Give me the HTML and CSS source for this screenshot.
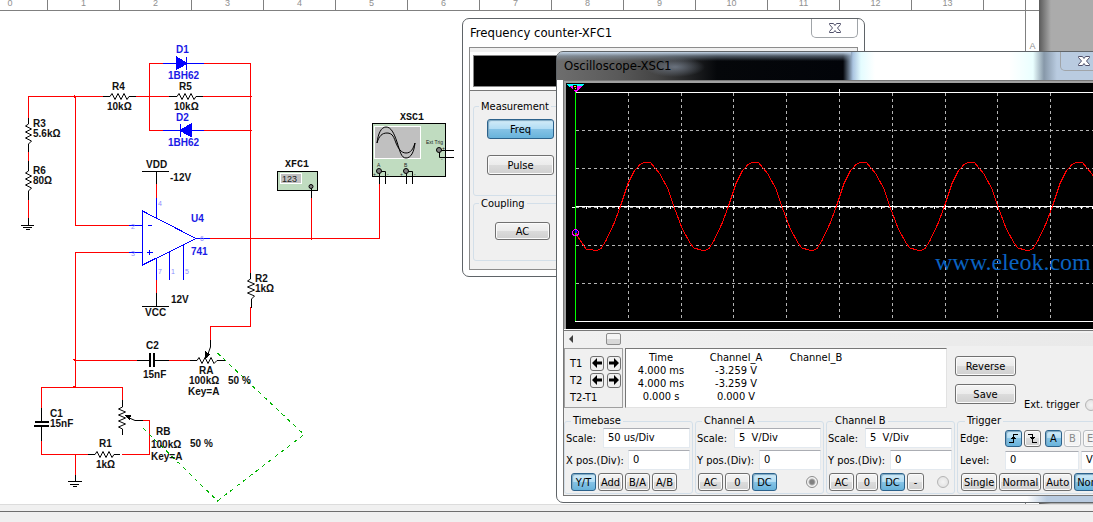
FILE: index.html
```html
<!DOCTYPE html>
<html lang="en">
<head>
<meta charset="utf-8">
<title>Circuit workspace</title>
<link rel="stylesheet" href="styles.css">
</head>
<body>
<main class="desk">
  <div class="sheet">
    <div class="ruler">
      <span>0</span><span>1</span><span>2</span><span>3</span><span>4</span><span>5</span><span>6</span><span>7</span><span>8</span><span>9</span><span>10</span><span>11</span><span>12</span><span>13</span>
    </div>
    <div class="row-mark">A</div>
    <svg class="schematic" width="460" height="504" shape-rendering="crispEdges">
      <g class="wire">
        <path d="M28.500 118V96.500H103M75.500 96V225.500H129M136 96.500H169M149.500 63V130.500H163M149 63.500H163M204 63.500H250.500V273M203 96.500H252M204 130.500H252M28.500 150V161M28.500 198V219M156.500 184V198M156.500 280V293M210 238.500H379.500V184M311.500 198V240M250.500 307V326.500H210.500V340M129 252.500H75.500V387M74 360.500H137M169 360.500H190M41.500 408V387.500H122.500V400M41.500 441V454.500H88M122 454.500H149.500V420.500H143M75.500 454V475"/>
        <path d="M73 359.500h3M73 386.500h3M73 454.500h3M74.500 95v3"/>
      </g>
      <g class="pen">
        <path d="M103 96.500h7l2-3 3 6 3-6 3 6 3-6 3 6 2-3h7M169 96.500h8l2-3 3 6 3-6 3 6 3-6 3 6 2-3h7"/>
        <path d="M28.500 118v6l-3 2 6 3-6 3 6 3-6 3 6 3-3 3v8M28.500 161v10l-3 2 6 3-6 3 6 3-6 3 6 3-3 3v9"/>
        <path d="M250.500 273v6l-3 2 7 3-7 3 7 3-7 3 7 3-3 3v9M190 360.500h7l2-3 3 6 3-6 3 6 3-6 3 6 3-3h8"/>
        <path d="M122.500 400v7l-4 2 7 3-7 3 7 3-7 3 7 3-7 3 4 2v6M88 454.500h7l2-3 3 6 3-6 3 6 3-6 3 6 2-3h6"/>
        <path d="M28.500 218v7M21 225.500h13M23 227.500h9M26 229.500h4M75.500 475v6M68 481.500h14M70 484.500h9M73 486.500h4"/>
        <path d="M142 171.500h27M156.500 171v13M142 306.500h27M156.500 293v13M137 360.500h12M155 360.500h14M41.500 408v13M41.500 426v15"/>
        <path d="M210.500 340v7l-4 11M143 420.500h-8l-9-4"/>
      </g>
      <path class="plate" d="M150 353v14M154 353v14M35 422h14M34 426h15"/>
      <path d="M205 351l5 3-5 5zM124 415l7 0-1 5z"/>
      <g class="blue">
        <path d="M163 63.500h41M163 130.500h41M186.500 57v13M180.500 124v13M142.500 211V265L196 238.500ZM129 225.500h14M129 252.500h14M196 238.500h14M156.500 198v20M156.500 258v22M169.500 252v28M183.500 245v35M148 225.500h4M147 252.500h6M149.500 250v5"/>
        <path class="solid" d="M176 56.500L187 63.500 176 69.500ZM191 124L180 130.500 191 136.500Z"/>
      </g>
      <path class="link" d="M217.500 353L304 434.500 217.500 501 142 427"/>
      <g class="name">
        <text x="112" y="90">R4</text><text x="107" y="110">10kΩ</text>
        <text x="179" y="90">R5</text><text x="174" y="110">10kΩ</text>
        <text x="33" y="127">R3</text><text x="33" y="137">5.6kΩ</text>
        <text x="33" y="174">R6</text><text x="33" y="184">80Ω</text>
        <text x="146" y="168">VDD</text><text x="170" y="181">-12V</text>
        <text x="171" y="303">12V</text><text x="145" y="316">VCC</text>
        <text x="255" y="282">R2</text><text x="255" y="292">1kΩ</text>
        <text x="146" y="349">C2</text><text x="143" y="378">15nF</text>
        <text x="199" y="374">RA</text><text x="189" y="384">100kΩ</text><text x="228" y="384">50 %</text><text x="188" y="395">Key=A</text>
        <text x="50" y="417">C1</text><text x="50" y="427">15nF</text>
        <text x="156" y="435">RB</text><text x="151" y="448">100kΩ</text><text x="190" y="447">50 %</text><text x="151" y="460">Key=A</text>
        <text x="99" y="447">R1</text><text x="96" y="468">1kΩ</text>
      </g>
      <g class="name part">
        <text x="176" y="53">D1</text><text x="168" y="79">1BH62</text><text x="176" y="121">D2</text><text x="168" y="146">1BH62</text>
        <text x="191" y="222">U4</text><text x="191" y="255">741</text>
      </g>
      <g class="pin">
        <text x="158" y="206">4</text><text x="131" y="229">2</text><text x="131" y="256">3</text><text x="200" y="241">6</text><text x="158" y="274">7</text><text x="171" y="274">1</text><text x="185" y="274">5</text>
      </g>
      <g class="device">
        <rect x="277.500" y="171.500" width="40" height="19"/>
        <rect x="372.500" y="123.500" width="73" height="53"/>
      </g>
      <g class="glass">
        <rect x="280.500" y="173.500" width="21" height="10"/>
        <rect x="374.500" y="126.500" width="46" height="32"/>
      </g>
      <g class="pen">
        <path d="M377 143c1-9 4-16 9-16s8 6 11 15 4 16 9 16 8-6 9-15M377 143c2-7 5-10 10-10 6 0 7 5 9 10s5 10 10 10 7-4 9-10"/>
        <path d="M311.500 188v10M379.500 172v12M380 171.500h5.500V184M406.500 172v12M407 171.500h5.500V184M439.500 151v6.500H454M440 150.500h14"/>
        <g class="port"><circle cx="311" cy="186.500" r="2"/><circle cx="379" cy="171" r="2.500"/><circle cx="406" cy="171" r="2.500"/><circle cx="439" cy="150" r="2.500"/></g>
      </g>
      <text class="digits" x="282" y="182">123</text>
      <g class="tag"><text x="285" y="167">XFC1</text><text x="400" y="120">XSC1</text></g>
      <g class="tiny"><text x="426" y="144">Ext Trig</text><text x="377" y="167">A</text><text x="404" y="167">B</text><text x="373" y="176">+</text><text x="400" y="176">+</text><text x="442" y="150">+</text><text x="387" y="176">-</text><text x="414" y="176">-</text><text x="441" y="161">-</text></g>
    </svg>
  </div>
  <div class="gutter"></div>

  <section class="window counter">
    <header class="caption">
      <h2>Frequency counter-XFC1</h2>
      <button class="close" aria-label="Close counter"><svg width="14" height="12"><path d="M1.500 1.500h4l1.500 2 1.500-2h4v1l-3 3.500 3 3.500v1h-4l-1.500-2-1.500 2h-4v-1l3-3.500-3-3.500z"/></svg></button>
    </header>
    <div class="counter-body">
      <div class="lcd-frame"><div class="lcd"></div></div>
      <div class="counter-groups">
        <fieldset class="box measure"><legend>Measurement</legend>
          <button class="btn on">Freq</button><button class="btn">Pulse</button>
        </fieldset>
        <fieldset class="box coupling"><legend>Coupling</legend>
          <button class="btn">AC</button>
        </fieldset>
      </div>
    </div>
  </section>

  <section class="window scope">
    <header class="caption glassy">
      <h2>Oscilloscope-XSC1</h2>
      <button class="close" aria-label="Close oscilloscope"><svg width="14" height="12"><path d="M1.500 1.500h4l1.500 2 1.500-2h4v1l-3 3.500 3 3.500v1h-4l-1.500-2-1.500 2h-4v-1l3-3.500-3-3.500z"/></svg></button>
    </header>
    <div class="scope-body">
      <div class="screen">
        <svg class="trace" height="246" shape-rendering="crispEdges">
          <g transform="translate(-566 -83)">
            <path class="grid" d="M628.500 93V321M681.500 93V321M733.500 93V321M786.500 93V321M839.500 93V321M892.500 93V321M945.500 93V321M997.500 93V321M1050.500 93V321M576 130.500H1130M576 168.500H1130M576 207.500H1130M576 245.500H1130M576 283.500H1130"/>
            <path class="axis" d="M575 92.500H1130M575 321.500H1130M575 206.500H1130M572 207.500h4M839.500 89v4"/>
            <path class="ticks" d="M586 207.500H1130"/>
            <path class="axis" d="M628.500 205v5M681.500 205v5M733.500 205v5M786.500 205v5M839.500 205v5M892.500 205v5M945.500 205v5M997.500 205v5M1050.500 205v5"/>
            <defs><path id="cycle" d="M593 250l4 .5 4-2 5-8 8-17 6-16 8-24 6-12 6-7 4-2 6-.5 10 12 8 15 6 18 8 21 8 15 4 5 7 2"/></defs>
            <g class="wave">
              <path d="M575 232l5 8 6 9 7 1"/>
              <use href="#cycle"/><use href="#cycle" x="108"/><use href="#cycle" x="216"/><use href="#cycle" x="324"/><use href="#cycle" x="432"/>
            </g>
            <path class="sweep" d="M575.500 92V321"/>
            <path fill="#0ff" d="M567 84h17l-2 3h-13z"/><path fill="#f0f" d="M569 86h13l-6.500 6.500z"/><path fill="#000" d="M573 85h4v5h-4z"/><path fill="#ff0" d="M574 86h2v1h-2zM575 88h1v1h-1z"/>
            <circle class="probe" cx="575.500" cy="232.500" r="3"/><path fill="#00f" d="M575 230h2v3h-2z"/>
            <text class="mark" x="935" y="270">www.eleok.com</text>
          </g>
        </svg>
      </div>
      <div class="scroll">
        <button class="scroll-left" aria-label="Scroll left"></button>
        <input type="range" class="slider" min="0" max="100" value="5" aria-label="Trace position">
      </div>
      <div class="readout">
        <div class="cursors">
          <span>T1</span><button class="arrow" aria-label="T1 left"><svg width="10" height="10"><path d="M0 5l5-5v3.500h5v3H5V10z"/></svg></button><button class="arrow" aria-label="T1 right"><svg width="10" height="10"><path d="M10 5L5 0v3.500H0v3h5V10z"/></svg></button>
          <span>T2</span><button class="arrow" aria-label="T2 left"><svg width="10" height="10"><path d="M0 5l5-5v3.500h5v3H5V10z"/></svg></button><button class="arrow" aria-label="T2 right"><svg width="10" height="10"><path d="M10 5L5 0v3.500H0v3h5V10z"/></svg></button>
          <span class="wide">T2-T1</span>
        </div>
        <div class="values">
          <table>
            <thead><tr><th>Time</th><th>Channel_A</th><th>Channel_B</th></tr></thead>
            <tbody>
              <tr><td>4.000 ms</td><td>-3.259 V</td><td></td></tr>
              <tr><td>4.000 ms</td><td>-3.259 V</td><td></td></tr>
              <tr><td>0.000 s</td><td>0.000 V</td><td></td></tr>
            </tbody>
          </table>
        </div>
        <div class="actions">
          <button class="btn">Reverse</button><button class="btn">Save</button>
        </div>
        <label class="ext">Ext. trigger <input type="radio" name="trig" class="dot" disabled></label>
      </div>
      <div class="panels">
        <fieldset class="box panel timebase"><legend>Timebase</legend>
          <div class="field"><label for="ts">Scale:</label><input id="ts" value="50 us/Div"></div>
          <div class="field"><label for="tx">X pos.(Div):</label><input id="tx" class="short" value="0"></div>
          <div class="keys"><button class="btn on">Y/T</button><button class="btn">Add</button><button class="btn">B/A</button><button class="btn">A/B</button></div>
        </fieldset>
        <fieldset class="box panel"><legend>Channel A</legend>
          <div class="field"><label for="as">Scale:</label><input id="as" value="5  V/Div"></div>
          <div class="field"><label for="ay">Y pos.(Div):</label><input id="ay" class="short" value="0"></div>
          <div class="keys"><button class="btn">AC</button><button class="btn">0</button><button class="btn on">DC</button><input type="radio" name="chan" class="dot" checked aria-label="Channel A source"></div>
        </fieldset>
        <fieldset class="box panel"><legend>Channel B</legend>
          <div class="field"><label for="bs">Scale:</label><input id="bs" value="5  V/Div"></div>
          <div class="field"><label for="by">Y pos.(Div):</label><input id="by" class="short" value="0"></div>
          <div class="keys"><button class="btn">AC</button><button class="btn zero">0</button><button class="btn on">DC</button><button class="btn slim">-</button><input type="radio" name="chan" class="dot" aria-label="Channel B source"></div>
        </fieldset>
        <fieldset class="box panel trigger"><legend>Trigger</legend>
          <div class="field"><span class="lead">Edge:</span>
            <button class="btn on icon" aria-label="Rising edge"><svg width="11" height="11"><path d="M1 9.500h4.500v-8H10M3 5.500h5M4 4.500h3"/></svg></button>
            <button class="btn icon" aria-label="Falling edge"><svg width="11" height="11"><path d="M1 1.500h4.500v8H10M3 4.500h5M4 5.500h3"/></svg></button>
            <button class="btn on icon gap">A</button><button class="btn icon" disabled>B</button><button class="btn ext-key" disabled>Ext</button>
          </div>
          <div class="field"><label class="lead" for="lv">Level:</label><input id="lv" value="0"><input class="unit" value="V" aria-label="Level unit"></div>
          <div class="keys"><button class="btn">Single</button><button class="btn">Normal</button><button class="btn">Auto</button><button class="btn on">None</button></div>
        </fieldset>
      </div>
    </div>
  </section>
</main>
<footer class="status"></footer>
</body>
</html>
```
FILE: styles.css
```css
* { box-sizing: border-box; }
body {
  margin: 0;
  height: 100vh;
  display: flex;
  flex-direction: column;
  overflow: hidden;
  background: #f0f0f0;
  color: #000;
  font: 11px/13px "DejaVu Sans Condensed", "DejaVu Sans", sans-serif;
}
button, input { font: inherit; color: inherit; margin: 0; }

/* Drawing sheet */
.desk { flex: 1; display: flex; position: relative; overflow: hidden; }
.sheet { flex: 1; min-width: 0; background: #fff; position: relative; }
.gutter { width: 54px; background: linear-gradient(to right, #5a5a5a, #ababab 12px); }
.ruler {
  display: flex;
  height: 11px;
  overflow: hidden;
  border-bottom: 1px solid #808080;
  padding-right: 14px;
}
.ruler span {
  flex: 0 0 72px;
  border-right: 1px solid #808080;
  text-align: center;
  color: #909090;
  font: 9px/7px "Liberation Sans", Arial, sans-serif;
}
.ruler span:first-child { margin-left: -24px; padding-right: 3px; }
.row-mark {
  float: right;
  width: 14px;
  height: 100%;
  margin-top: -11px;
  padding-top: 42px;
  border-left: 1px solid #808080;
  text-align: center;
  color: #909090;
  font: 9px/9px "Liberation Sans", Arial, sans-serif;
}
.schematic { position: absolute; left: 0; top: 0; }
.wire { fill: none; stroke: #f00; }
.pen { fill: none; stroke: #000; shape-rendering: auto; }
.plate { stroke: #000; stroke-width: 2; fill: none; }
.blue { fill: none; stroke: #00f; }
.solid { fill: #00f; }
.link { fill: none; stroke: #00b400; stroke-dasharray: 4 4; }
.name { font: bold 10px "Liberation Sans", Arial, sans-serif; fill: #111; }
.part { fill: #1a1ae6; }
.pin { font: 7px "Liberation Sans", Arial, sans-serif; fill: #8c8cff; }
.device { fill: #c0dcc0; stroke: #000; }
.glass { fill: #c0c0c0; stroke: #fff; }
.port { fill: #808080; }
.digits { font: 9px "Liberation Sans", Arial, sans-serif; fill: #222; }
.tag { font: bold 10px "Liberation Mono", "Courier New", monospace; fill: #111; }
.tiny { font: 5px "Liberation Sans", Arial, sans-serif; fill: #222; }
.status { height: 18px; border-top: 1px solid #dcdcdc; background: linear-gradient(#f0f0f0 6px, #6e6e6e 6px, #6e6e6e 7px, #f0f0f0 7px); }

/* Windows */
.window { position: absolute; border: 1px solid #5f6468; border-radius: 7px; background: #fff; }
.counter { left: 462px; top: 18px; width: 403px; height: 259px; padding: 0 6px 6px; display: flex; flex-direction: column; }
.scope { left: 556px; top: 51px; right: -22px; padding: 0 6px 6px; background: linear-gradient(to right, #fff 470px, #b9cbe0 490px); overflow: hidden; }
.caption { display: flex; justify-content: space-between; flex: 0 0 28px; }
.caption h2 { margin: 0; font: 13px/28px "DejaVu Sans Condensed", "DejaVu Sans", sans-serif; }
.counter h2 { padding-left: 1px; }
.close {
  width: 47px;
  height: 19px;
  padding: 0;
  display: flex;
  align-items: center;
  justify-content: center;
  border: 1px solid #a0a4a8;
  border-top: 0;
  border-radius: 0 0 5px 5px;
  background: transparent;
}
.close path { fill: #fff; stroke: #50506a; }
.glassy {
  margin: 0 -6px;
  padding: 0 7px;
  height: 28px;
  background:
    linear-gradient(#c3d5e8, rgba(150, 170, 190, 0.5) 4px, transparent 9px) no-repeat 0 0 / 294px 100%,
    radial-gradient(ellipse 30px 10px at 118px 15px, rgba(120, 130, 145, 0.8), transparent) no-repeat,
    linear-gradient(to right, #6e6e6e 0, #5a5a5a 60px, #444 100px, #05070a 160px, #020409 286px, #aac4e0 296px, #e4fcff 304px, #fff 318px, #fff 452px, #eaffff 476px, #8798a9 487px, #b9cbe0 500px);
}
.counter-body { flex: 1; border: 1px solid #8c8c8c; background: #f0f0f0; display: flex; flex-direction: column; }
.lcd-frame { margin-top: 4px; padding: 3px; background: #fff; border-bottom: 1px solid #777; }
.lcd { height: 32px; background: #000; border: 1px solid #888; }
.counter-groups { padding: 9px 0 0 3px; }
.box { margin: 0; padding: 0; min-width: 0; border: 1px solid #d3dfe9; border-radius: 3px; }
.box legend { padding: 0 2px; margin-left: 5px; }
.measure, .coupling { width: 130px; }
.measure { height: 96px; display: flex; flex-direction: column; gap: 16px; }
.measure .btn { width: 67px; height: 20px; margin-left: 13px; }
.measure .btn.on { margin-top: 6px; }
.coupling { height: 64px; margin-top: 1px; }
.coupling .btn { width: 55px; height: 18px; margin: 12px 0 0 21px; }

.btn {
  padding: 0;
  border: 1px solid #707070;
  border-radius: 3px;
  background: linear-gradient(#f4f4f4, #ebebeb 50%, #dcdcdc 50%, #d0d0d0);
  box-shadow: inset 0 0 0 1px #fbfbfb;
  display: flex;
  align-items: center;
  justify-content: center;
}
.btn.on { border-color: #2c628b; background: linear-gradient(#d4ecf8, #b0dcf4 50%, #86c3e6 50%, #68b3db); box-shadow: inset 1px 1px 1px #7aa6c0; }
.btn:disabled { border-color: #b8bcc0; background: #f4f4f4; color: #8a8a8a; }

/* Oscilloscope */
.scope-body { background: #f0f0f0; border: 1px solid #777; }
.screen { padding: 2px 2px 0; background: #a0a0a0; border-bottom: 1px solid #fff; }
.trace { display: block; width: 100%; background: #000; }
.grid { fill: none; stroke: #b4b4b4; stroke-dasharray: 3 3; }
.axis { fill: none; stroke: #fff; }
.ticks { stroke: #fff; stroke-width: 3; stroke-dasharray: 1 9.540; }
.wave { fill: none; stroke: #f00; }
.sweep { stroke: #0f0; fill: none; }
.probe { fill: none; stroke: #f0f; }
.mark { font: 24px "Liberation Serif", "Times New Roman", serif; fill: #0a62c0; }
.scroll { display: flex; height: 17px; align-items: center; border-top: 1px solid #777; }
.scroll-left { width: 16px; height: 8px; padding: 0; border: 0; background: #404040; clip-path: polygon(5px 4px, 9px 0, 9px 8px); }
.slider { flex: 1; min-width: 0; height: 13px; appearance: none; background: linear-gradient(to right, #f0f0f0, #e9e9e9); margin-right: 2px; }
.slider::-webkit-slider-thumb { appearance: none; width: 15px; height: 12px; border: 1px solid #8c8c8c; border-radius: 2px; background: linear-gradient(#f4f4f4 50%, #d8d8d8 50%); }
.readout { display: flex; height: 60px; margin-top: 1px; }
.cursors {
  width: 59px;
  padding: 6px 2px 0 5px;
  border: 1px solid #a0a0a0;
  display: grid;
  grid-template-columns: 17px 14px 14px;
  grid-template-rows: 16px 16px 17px;
  column-gap: 3px;
  row-gap: 1px;
  align-items: center;
}
.wide { grid-column: 1 / -1; }
.arrow { width: 14px; height: 15px; padding: 0; border: 1px solid #707070; border-radius: 3px; background: #f0f0f0; display: flex; align-items: center; justify-content: center; }
.values { width: 322px; margin-left: 2px; padding-top: 2px; border: 1px solid #e2e2e2; border-top-color: #777; border-left-color: #777; background: #fff; }
table { border-collapse: collapse; table-layout: fixed; width: 230px; }
th, td { padding: 0; height: 13px; text-align: center; font-weight: normal; }
th:first-child { width: 70px; }
.actions { display: flex; flex-direction: column; gap: 8px; margin: 8px 0 0 8px; }
.actions .btn { width: 61px; height: 20px; }
.ext { display: flex; align-items: center; gap: 5px; height: 13px; margin: 50px 0 0 8px; white-space: nowrap; }
.dot { appearance: none; flex: none; width: 12px; height: 12px; border: 1px solid #b4b4b4; border-radius: 50%; background: radial-gradient(#f4f4f4, #dedede); }
.dot:checked { border-color: #8c8c8c; background: radial-gradient(#808080 0 2px, #b0b0b0 3px, #f4f4f4 4px); }
.panels { display: flex; gap: 2px; margin-top: 7px; padding-bottom: 1px; }
.panel { flex: 0 0 129px; height: 79px; padding: 0 2px 0 1px; }
.panel legend { height: 12px; line-height: 12px; }
.trigger { flex: 1 0 135px; overflow: hidden; padding-left: 2px; }
.field { display: flex; align-items: center; justify-content: space-between; height: 22px; white-space: nowrap; }
.field input { flex: none; width: 87px; height: 20px; padding: 0 7px 1px 4px; border: 1px solid #e3e9ef; border-top-color: #abadb3; background: #fff; white-space: pre; }
.field .short { width: 62px; }
.keys { display: flex; gap: 2px; align-items: center; padding: 2px 3px 0 1px; }
.keys .btn { height: 18px; width: 25px; }
.timebase .keys { padding-left: 5px; }
.keys .slim { width: 17px; }
.keys .zero { width: 22px; }
.keys .dot { margin-left: auto; }
.trigger .field { justify-content: flex-start; gap: 2px; }
.trigger .lead { flex: none; width: 43px; }
.trigger .icon { flex: none; width: 17px; height: 17px; }
.trigger .ext-key { flex: none; width: 24px; height: 17px; }
.trigger .gap { margin-left: 2px; }
.trigger .icon path { fill: none; stroke: #000; shape-rendering: crispEdges; }
.trigger .field input { width: 74px; height: 19px; }
.trigger .field .unit { width: 50px; }
.trigger .keys .btn { flex: none; width: auto; padding: 0 2px; }
```
